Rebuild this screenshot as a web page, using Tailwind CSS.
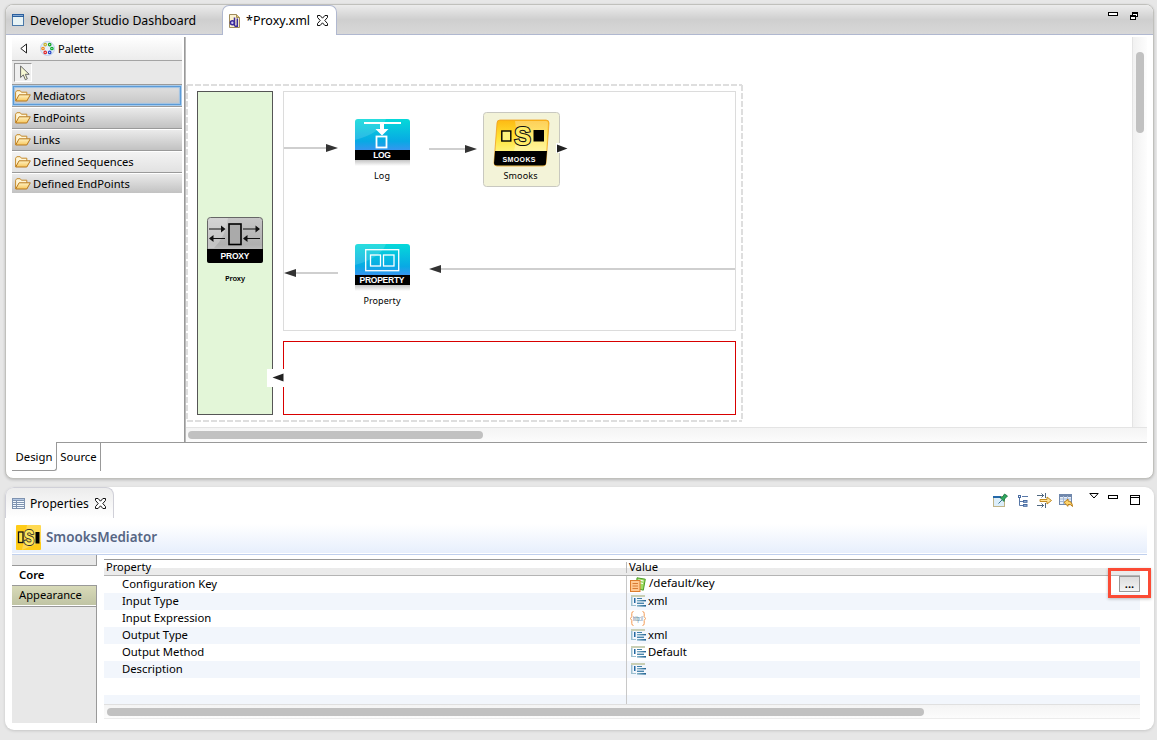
<!DOCTYPE html>
<html lang="en">
<head>
<meta charset="utf-8">
<title>Developer Studio</title>
<script src="https://cdn.jsdelivr.net/npm/@tailwindcss/browser@4"></script>
</head>
<body class="w-[1157px] h-[740px] overflow-hidden bg-[#e7e7e7] font-['Noto_Sans',sans-serif] text-[11.3px] leading-4 text-black">
<svg class="absolute h-0 w-0">
  <defs>
    <linearGradient id="gFolder" x1="0" y1="0" x2="0" y2="1"><stop offset="0" stop-color="#fff3c4"/><stop offset="1" stop-color="#f7c65c"/></linearGradient>
    <linearGradient id="gBlue" x1="0" y1="0" x2="0" y2="1"><stop offset="0" stop-color="#05d9d9"/><stop offset=".7" stop-color="#08a9e4"/><stop offset="1" stop-color="#3c93f0"/></linearGradient>
    <linearGradient id="gGray" x1="0" y1="0" x2="0" y2="1"><stop offset="0" stop-color="#c6c6c6"/><stop offset=".6" stop-color="#b0b0b0"/><stop offset="1" stop-color="#dcdcdc"/></linearGradient>
    <linearGradient id="gYellow" x1="0" y1="0" x2="0" y2="1"><stop offset="0" stop-color="#fdb913"/><stop offset=".35" stop-color="#ffe030"/><stop offset=".7" stop-color="#fff37c"/></linearGradient>
    <linearGradient id="gShadow" x1="0" y1="0" x2="0" y2="1"><stop offset="0" stop-color="#c4c4c4"/><stop offset="1" stop-color="#ffffff"/></linearGradient>
    <linearGradient id="gField" x1="0" y1="0" x2="1" y2="0"><stop offset="0" stop-color="#83b4c8"/><stop offset="1" stop-color="#1e6091"/></linearGradient>
    <symbol id="folder" viewBox="0 0 16 12">
      <path d="M.6 10.8V2.2L1.800.7h3.400l1.200 1.500h5.400v2.600" fill="#fff6d6" stroke="#c58a2c"/>
      <path d="M.7 11l3.400-6.200h11.200L11.800 11z" fill="url(#gFolder)" stroke="#b8781c"/>
    </symbol>
    <symbol id="close" viewBox="0 0 11 11">
      <path d="M.5 .5h2.600l2.400 2.700L7.900.5h2.600v1.900L7.800 5.500l2.700 3.100v1.900H7.900L5.500 7.800l-2.400 2.700H.5V8.600l2.700-3.100L.5 2.400z" fill="#fff" stroke="#111"/>
    </symbol>
    <symbol id="field" viewBox="0 0 16 12">
      <rect x="0" y="0" width="14" height="2" fill="#c9cfb4"/><path d="M0 2h1.500v8H5v1H0z" fill="#9cc0d0"/>
      <rect x="3" y="3" width="1.500" height="5" fill="#2469a0"/>
      <rect x="6" y="3" width="5" height="1" fill="#3f7fa8"/><rect x="6" y="5" width="9" height="1.400" fill="url(#gField)"/><rect x="6" y="7.600" width="7" height="1.400" fill="#4a86ac"/><rect x="6" y="10" width="9" height="1.600" fill="url(#gField)"/>
    </symbol>
  </defs>
</svg>
<div class="flex h-full flex-col pl-[5px] pr-[3px] pt-[4px]">

  <!-- Editor -->
  <section class="flex h-[475px] shrink-0 flex-col overflow-hidden rounded-[8px] border border-[#c0c0bc] bg-white shadow-[0_1px_3px_rgba(0,0,0,0.2)]">
    <div class="flex h-[30px] shrink-0 border-b border-[#b0b8d0] bg-linear-to-b from-[#ececec] via-[#cfcfcf] to-[#d8d8d8]">
      <div class="flex w-[216px] items-center pl-[6px]">
        <svg class="h-3 w-3" viewBox="0 0 12 12"><rect x=".5" y=".5" width="11" height="11" fill="#e8f3f5" stroke="#4a78a8"/><rect width="12" height="3" fill="#2a5f9e"/><path d="M1 1.500h10" stroke="#87abd4"/></svg>
        <span class="ml-[6px] mt-[2px] whitespace-nowrap text-[12.3px]">Developer Studio Dashboard</span>
      </div>
      <div class="-mb-px flex h-[30px] w-[115px] items-center rounded-t-[7px] border border-b-0 border-[#b0b8d0] bg-white pl-[6px]">
        <svg class="h-[14px] w-[11px]" viewBox="0 0 11 14"><path d="M.5.5h7l3 3v10H.5z" fill="#fbf1d0" stroke="#a08c5c"/><path d="M7.500.5v3h3" fill="#e0c070" stroke="#a08c5c"/><circle cx="3.400" cy="8.800" r="2" fill="#cfc8f4" stroke="#3b2a9c" stroke-width="1.500"/><path d="M5.500 3.500v8.500M8.300 4.500v7.700H5.500" fill="none" stroke="#3b2a9c" stroke-width="1.500"/></svg>
        <span class="ml-[6px] mt-px whitespace-nowrap text-[12.500px]">*Proxy.xml</span>
        <svg class="ml-[7px] h-[11px] w-[11px]"><use href="#close"/></svg>
      </div>
      <div class="ml-auto flex items-start gap-[12px] pr-[14px] pt-[7px]">
        <svg class="h-[10px] w-[10px]" viewBox="0 0 10 10"><rect x=".5" y=".5" width="9" height="3" fill="#fff" stroke="#000"/></svg>
        <svg class="h-[8px] w-[9px]" viewBox="0 0 9 8"><g fill="#fff" stroke="#000" shape-rendering="crispEdges"><rect x="2.500" y=".5" width="5" height="4"/><path d="M2 1.500h6"/><rect x=".5" y="3.500" width="5" height="4"/><path d="M0 4.500h6"/></g></svg>
      </div>
    </div>

    <div class="flex h-[407px] shrink-0 pl-[6px] pr-[6px] pt-[2px]">
      <!-- Palette -->
      <aside class="flex w-[170px] shrink-0 flex-col">
        <div class="flex h-[24px] items-center border-b border-[#a4a4a4] bg-linear-to-b from-white to-[#ececec] pl-[8px]">
          <svg class="h-[11px] w-[7px]" viewBox="0 0 7 11"><path d="M6.500 1v9L.8 5.500z" fill="#fff" stroke="#222"/></svg>
          <svg class="ml-[13px] h-[15px] w-[15px]" viewBox="0 0 15 15"><circle cx="7.500" cy="7.500" r="7" fill="#e4eefb" stroke="#bcd0ea"/><g fill="#fff" stroke-width="1.300"><circle cx="5.200" cy="3.600" r="1.200" stroke="#c8b430"/><circle cx="9.700" cy="3.600" r="1.200" stroke="#18a428"/><circle cx="3" cy="7.500" r="1.200" stroke="#f08c20"/><circle cx="11.900" cy="7.500" r="1.200" stroke="#10ac34"/><circle cx="5.200" cy="11.400" r="1.200" stroke="#e02c2c"/><circle cx="9.700" cy="11.400" r="1.200" stroke="#2848c8"/></g></svg>
          <span class="ml-[3px] mt-px text-[11px]">Palette</span>
        </div>
        <div class="h-[23px] bg-[#e8e8e8] pl-[2px] pt-[2px]">
          <div class="flex h-[19px] w-[18px] items-center justify-center border border-[#999] border-r-white border-b-white bg-[#efefef] pl-[3px]">
            <svg class="h-[16px] w-[10px]" viewBox="0 0 10 16"><path d="M.6 1v11.500l2.700-2.600 2 4.800 2-.9-2-4.500h3.900z" fill="#f7f8d4" stroke="#666"/></svg>
          </div>
        </div>
        <div class="flex h-[22px] items-center border-t border-[#9a9a9a] bg-linear-to-b from-[#e2e2e2] to-[#c4c4c4] pl-[3px] text-[11px] shadow-[inset_0_0_0_1px_#a9cbea,inset_0_0_0_2px_#5b9bd8,inset_0_0_1px_3px_#9fc3e4]"><svg class="h-3 w-4"><use href="#folder"/></svg><span class="ml-[2px]">Mediators</span></div>
        <div class="flex h-[22px] items-center border-t border-[#9a9a9a] bg-linear-to-b from-[#ededed] to-[#c2c2c2] pl-[3px] text-[11px] shadow-[inset_0_1px_0_#fff]"><svg class="h-3 w-4"><use href="#folder"/></svg><span class="ml-[2px]">EndPoints</span></div>
        <div class="flex h-[22px] items-center border-t border-[#9a9a9a] bg-linear-to-b from-[#ededed] to-[#c2c2c2] pl-[3px] shadow-[inset_0_1px_0_#fff]"><svg class="h-3 w-4"><use href="#folder"/></svg><span class="ml-[2px]">Links</span></div>
        <div class="flex h-[22px] items-center border-t border-[#9a9a9a] bg-linear-to-b from-[#f4f4f4] to-[#e2e2e2] pl-[3px] text-[11.200px] shadow-[inset_0_1px_0_#fff]"><svg class="h-3 w-4"><use href="#folder"/></svg><span class="ml-[2px]">Defined Sequences</span></div>
        <div class="flex h-[21px] items-center border-t border-[#9a9a9a] bg-linear-to-b from-[#ededed] to-[#c2c2c2] pl-[3px] pt-px text-[11.200px] shadow-[inset_0_1px_0_#fff]"><svg class="h-3 w-4"><use href="#folder"/></svg><span class="ml-[2px]">Defined EndPoints</span></div>
      </aside>
      <div class="ml-[2px] w-[2px] shrink-0 border-l border-[#999] bg-[#bbb]"></div>

      <!-- Diagram -->
      <div class="flex min-w-0 grow flex-col">
        <div class="flex h-[390px] shrink-0">
          <svg class="h-[390px] w-[946px] shrink-0" viewBox="186 37 946 390" font-family="'Noto Sans',sans-serif">
            <g fill="none" stroke="#dedede" stroke-width="2" stroke-dasharray="6 2"><path d="M187 85H742"/><path d="M742 85V421"/><path d="M187 421H742"/><path d="M187 85V421"/></g>
            <rect x="197.500" y="91.500" width="75" height="323" fill="#e3f6d8" stroke="#555"/>
            <rect x="283.500" y="91.500" width="452" height="239" fill="#fff" stroke="#dcdcdc"/>
            <rect x="283.500" y="341.500" width="452" height="73" fill="#fff" stroke="#d80000"/>
            <rect x="267" y="369" width="18" height="18" fill="#fff"/>
            <path d="M272.500 377.500l11-4v8z" fill="#222"/>
            <g stroke="#cfcfcf" stroke-width="2"><path d="M284 148H330"/><path d="M429 149H468"/><path d="M292 273H338"/><path d="M438 269H735"/></g>
            <g fill="#333"><path d="M338 148l-12-4v8z"/><path d="M477 149l-12-4v8z"/><path d="M284 273l12-4v8z"/><path d="M429 269l12-4v8z"/></g>

            <rect x="207.500" y="217.500" width="55" height="45" rx="3" fill="url(#gGray)" stroke="#666"/>
            <path d="M208 248V220q0-2 3-2H228q-2 18-14 30z" fill="#fff" opacity=".25"/>
            <path d="M207 249h56v12q0 2-2 2h-52q-2 0-2-2z"/>
            <rect x="229" y="224" width="12" height="20.500" fill="#aaa" stroke="#000" stroke-width="1.600"/>
            <g stroke="#111" stroke-width="1.200" fill="#111"><path d="M209 229H222M225 238.500H212M243 229H256M260 238.500H247"/><path stroke="none" d="M221 225.500l4.500 3.500-4.500 3.500zM213.500 235l-4.500 3.500 4.500 3.500zM255.500 225.500l4.500 3.500-4.500 3.500zM247.500 235l-4.500 3.500 4.500 3.500z"/></g>
            <text x="235" y="259" font-family="'Liberation Sans',sans-serif" font-weight="700" font-size="8.500" fill="#fff" text-anchor="middle" textLength="29">PROXY</text>
            <text x="235" y="281" font-size="7.500" font-weight="600" text-anchor="middle" textLength="20">Proxy</text>

            <rect x="355" y="160" width="55" height="6" fill="url(#gShadow)"/>
            <path d="M355 151V122q0-3 3-3h49q3 0 3 3V151z" fill="url(#gBlue)"/>
            <path d="M355 140V122q0-3 3-3H386q-5 14-31 21z" fill="#fff" opacity=".14"/>
            <rect x="355" y="150" width="55" height="10"/>
            <path d="M364 122h37v2H384v5h4.500L382 135.500 375.500 129H380v-5H364z" fill="#fff"/>
            <rect x="376.500" y="136.500" width="10" height="11" fill="none" stroke="#fff" stroke-width="1.800"/>
            <text x="382" y="158" font-family="'Liberation Sans',sans-serif" font-weight="700" font-size="8.500" fill="#fff" text-anchor="middle" textLength="17.500">LOG</text>
            <text x="382" y="179" font-size="9" text-anchor="middle" textLength="16">Log</text>

            <rect x="355" y="285" width="55" height="6" fill="url(#gShadow)"/>
            <path d="M355 276V247q0-3 3-3h49q3 0 3 3V276z" fill="url(#gBlue)"/>
            <path d="M355 265V247q0-3 3-3H386q-5 14-31 21z" fill="#fff" opacity=".14"/>
            <rect x="355" y="275" width="55" height="10"/>
            <g fill="none" stroke="#fff" stroke-width="1.300"><rect x="365.700" y="249.700" width="33" height="21"/><rect x="370.500" y="255" width="10" height="11"/><rect x="383.500" y="255" width="10.500" height="11"/></g>
            <text x="382" y="283" font-family="'Liberation Sans',sans-serif" font-weight="700" font-size="8.500" fill="#fff" text-anchor="middle" textLength="45">PROPERTY</text>
            <text x="382" y="304" font-size="9" text-anchor="middle" textLength="37">Property</text>

            <rect x="483.500" y="112.500" width="76" height="74" rx="3" fill="#f3f3d8" stroke="#c8c8c0"/>
            <path d="M500 120H546q3 0 3 3L546 163q0 3-3 3H497q-3 0-3-3L497 123q0-3 3-3z" fill="url(#gYellow)" stroke="#f0a020" stroke-width=".800"/>
            <path d="M515 121H546q2 0 2 2L546 151H514q4-14 1-30z" fill="#fff" opacity=".3"/>
            <path d="M495 151H547L546 163q0 2.500-3 2.500H497q-3 0-3-2.500z"/>
            <rect x="501.800" y="131" width="9" height="10" fill="#fff37c" stroke="#000" stroke-width="1.400"/>
            <rect x="533.500" y="130" width="10.500" height="11.500"/>
            <text x="522.500" y="145" font-family="'Liberation Sans',sans-serif" font-size="25" font-weight="700" fill="#ffec68" stroke="#111" stroke-width="2.200" paint-order="stroke" text-anchor="middle">S</text>
            <text x="519" y="162" font-family="'Liberation Sans',sans-serif" font-weight="700" font-size="7" fill="#fff" text-anchor="middle" textLength="33">SMOOKS</text>
            <text x="520.500" y="179" font-size="9" text-anchor="middle" textLength="34">Smooks</text>
            <rect x="556" y="143" width="4" height="10" fill="#fff"/>
            <path d="M557 144.500l10.500 4-10.500 4z" fill="#222"/>
          </svg>
          <div class="flex grow justify-center border-l border-[#e4e4e4] bg-linear-to-r from-[#f1f1f1] to-[#fdfdfd] pt-[15px]"><div class="h-[81px] w-[8px] rounded-full bg-[#c1c1c1]"></div></div>
        </div>
        <div class="h-[15px] border-t border-[#e4e4e4] bg-linear-to-b from-[#f4f4f4] to-[#fcfcfc] pl-[2px] pt-[3px]"><div class="h-[8px] w-[295px] rounded-full bg-[#c1c1c1]"></div></div>
      </div>
    </div>

    <div class="flex h-[29px] shrink-0 pl-[6px] pr-[6px]">
      <div class="flex w-[45px] items-center justify-center rounded-br-[3px] border-r border-b border-[#999] pt-[2px]">Design</div>
      <div class="flex w-[44px] items-center justify-center border-t border-r border-[#999]">Source</div>
      <div class="grow border-t border-[#999]"></div>
    </div>
  </section>

  <!-- Properties -->
  <section class="mt-[8px] flex h-[243px] shrink-0 flex-col overflow-hidden rounded-[9px] bg-white shadow-[0_1px_3px_rgba(0,0,0,0.15)]">
    <div class="flex h-[37px] shrink-0">
      <div class="flex h-[31px] w-[109px] items-center rounded-t-[8px] border border-b-0 border-[#d0d0d8] bg-linear-to-b from-[#ececec] to-white pl-[6px]">
        <svg class="h-[11px] w-[13px]" viewBox="0 0 13 11" shape-rendering="crispEdges"><rect width="13" height="11" fill="#7f93b0"/><rect x="1" y="1" width="11" height="1" fill="#b4c8e4"/><g fill="#f4faff"><path d="M1 3h3v1H1zM5 3h7v1H5zM1 5h3v1H1zM5 5h7v1H5zM1 7h3v1H1zM5 7h7v1H5zM1 9h3v1H1zM5 9h7v1H5z"/></g></svg>
        <span class="ml-[5px] mt-px text-[12.100px]">Properties</span>
        <svg class="ml-[6px] h-[11px] w-[11px]"><use href="#close"/></svg>
      </div>
      <div class="ml-auto flex items-start pr-[14px] pt-[6px]">
        <svg class="h-[15px] w-[15px]" viewBox="0 0 15 15"><rect x=".5" y="3.500" width="11" height="10" fill="#dceefa" stroke="#c0b488"/><path d="M0 4h8" stroke="#2468a8" stroke-width="2"/><path d="M5.500 10.500l4-4" stroke="#3c7890"/><path d="M7 4.500l2.500-.5 2-3 3 2-3 3-.5 2.500z" fill="#2fa860" stroke="#147038" stroke-width=".800"/></svg>
        <svg class="ml-[10px] mt-[2px] h-[12px] w-[10px]" viewBox="0 0 10 12"><path d="M1.500 2v8.500H5M1.500 6.500H5M4 1.500h6" fill="none" stroke="#5878a8"/><rect x=".5" y=".5" width="2" height="2" fill="#fff" stroke="#4a6ca0"/><rect x="5.500" y="5.500" width="3.500" height="1.800" fill="#9cb8e0" stroke="#4a6ca0"/><rect x="5.500" y="9.500" width="3.500" height="1.800" fill="#9cb8e0" stroke="#4a6ca0"/></svg>
        <svg class="ml-[9px] h-[15px] w-[15px]" viewBox="0 0 15 15"><path d="M0 2.500h7M4.500 .5l2 2-2 2M8.500 0v5M0 12.500h7M4.500 10.500l2 2-2 2M8.500 10v5" fill="none" stroke="#506880"/><path d="M3 6.500h7V4l4.500 3.500L10 11V8.500H3z" fill="#ffe49c" stroke="#c08a20"/></svg>
        <svg class="ml-[7px] mt-px h-[13px] w-[14px]" viewBox="0 0 14 13"><rect x=".5" y=".5" width="12" height="10" fill="#e8f0fa" stroke="#7088ac"/><path d="M1 2h11" stroke="#7088ac" stroke-width="2"/><path d="M1 5h11M1 7.500h11M4.500 2v8M8.500 2v8" stroke="#a4b8d4"/><path d="M5 8.500l4-3.500v2q4 0 4.500 5.500Q12 10 9 10.500v1.800z" fill="#ffd468" stroke="#b87c18"/></svg>
        <svg class="ml-[16px] h-[6px] w-[10px]" viewBox="0 0 10 6"><path d="M.8.5h8.400L5 5z" fill="#fff" stroke="#000"/></svg>
        <svg class="ml-[9px] mt-[2px] h-[4px] w-[10px]" viewBox="0 0 10 4"><rect x=".5" y=".5" width="9" height="3" fill="#fff" stroke="#000"/></svg>
        <svg class="ml-[12px] mt-[2px] h-[10px] w-[10px]" viewBox="0 0 10 10" shape-rendering="crispEdges"><rect x=".5" y=".5" width="9" height="9" fill="#fff" stroke="#000"/><path d="M0 2.500h10" stroke="#000"/></svg>
      </div>
    </div>
    <div class="ml-[7px] mr-[7px] flex h-[31px] shrink-0 items-center border-b border-[#c0d0ee] bg-linear-to-b from-white to-[#e6eefc] pb-[4px] pl-[4px] shadow-[inset_0_-1px_0_#fff]">
      <svg class="h-[25px] w-[25px]" viewBox="0 0 25 25"><rect width="25" height="25" rx="1" fill="#ffcc18"/><path d="M11 0h14v17L6 25z" fill="#fff" opacity=".25"/><rect x="2.500" y="7" width="4.500" height="10.500" fill="#ffe24c" stroke="#111" stroke-width="1.300"/><rect x="19.500" y="7" width="4" height="11.500"/><text x="13" y="20" font-family="'Liberation Sans',sans-serif" font-size="22" font-weight="700" text-anchor="middle" textLength="10.500" lengthAdjust="spacingAndGlyphs" fill="#ffe860" stroke="#333" stroke-width="2" paint-order="stroke">S</text></svg>
      <h1 class="ml-[5px] text-[13.400px] font-semibold text-[#566684]">SmooksMediator</h1>
    </div>

    <div class="ml-[7px] mr-[14px] flex h-[168px] shrink-0">
      <nav class="flex w-[85px] shrink-0 flex-col">
        <div class="h-[11px] border-r border-b border-[#999] bg-[#e8e8e8]"></div>
        <div class="flex h-[19px] items-center pb-[2px] pl-[7px] font-semibold">Core</div>
        <div class="flex h-[20px] items-center border-t border-r border-[#999] bg-linear-to-b from-[#d8dab8] to-[#c0c4a4] pb-px pl-[7px] text-[11.200px]">Appearance</div>
        <div class="h-[2px] border-b border-r border-[#999] bg-white"></div>
        <div class="grow border-r border-[#999] bg-[#e8e8e8]"></div>
      </nav>

      <div class="ml-[7px] mt-[4px] flex grow flex-col">
        <div class="flex h-[17px] shrink-0 items-center border-y border-t-[#999] border-b-[#b4b4b4] bg-linear-to-b from-white from-50% to-[#ebebeb] to-50%">
          <div class="flex h-[11px] w-[523px] items-center border-r border-[#bbb] pl-[2px]"><span class="-mt-px text-[11.100px]">Property</span></div><div class="-mt-px pl-[2px]">Value</div>
        </div>
        <div class="relative flex h-[17px] shrink-0">
          <div class="w-[523px] border-r border-[#c8c8c8] pl-[18px]">Configuration Key</div>
          <div class="flex grow items-center">
            <svg class="ml-[3px] h-[15px] w-[16px]" viewBox="0 0 16 15"><path d="M7 .8l8.300 1.400-2 11-7-2z" fill="#9edc60" stroke="#4a9a28"/><path d="M8.500 3l5 1M8.500 5.500l4.500 1" stroke="#fff"/><rect x=".5" y="3.500" width="9.500" height="11" fill="#ffc890" stroke="#dc7c2c"/><path d="M2.500 6.500h5.500M2.500 9h5.500M2.500 11.500h5.500" stroke="#d87c34"/></svg>
            <span class="ml-[3px] -mt-[3px] text-[11.600px]">/default/key</span>
            <div class="ml-auto -mt-px flex h-[16px] w-[21px] items-end justify-center border border-[#999] bg-linear-to-b from-[#ddd] to-[#f4f4f4]"><span class="font-semibold leading-[14px]">...</span></div>
          </div>
          <div class="absolute -top-[8px] -right-[11px] h-[30px] w-[43px] border-[3px] border-[#fb4b35] shadow-[0_1px_3px_rgba(0,0,0,0.25)]"></div>
        </div>
        <div class="flex h-[17px] shrink-0 bg-[#f2f6fc]"><div class="w-[523px] border-r border-[#c8c8c8] pl-[18px]">Input Type</div><div class="flex h-4 items-center"><svg class="ml-[4px] h-3 w-4"><use href="#field"/></svg><span class="ml-px">xml</span></div></div>
        <div class="flex h-[17px] shrink-0"><div class="w-[523px] border-r border-[#c8c8c8] pl-[18px]">Input Expression</div><div class="flex items-center"><svg class="ml-[3px] h-[15px] w-4 overflow-visible" viewBox="0 0 16 15"><path d="M3.500.5Q1.800.5 1.800 2.500v3L.5 7.500l1.300 2v3q0 2 1.700 2M12.500.5q1.700 0 1.700 2v3l1.300 2-1.300 2v3q0 2-1.700 2" fill="none" stroke="#f49a54"/><text x="3" y="9.500" font-family="'Liberation Sans',sans-serif" font-weight="700" font-size="6.500" textLength="10" lengthAdjust="spacingAndGlyphs" fill="#7090a8">http://</text></svg></div></div>
        <div class="flex h-[17px] shrink-0 bg-[#f2f6fc]"><div class="w-[523px] border-r border-[#c8c8c8] pl-[18px]">Output Type</div><div class="flex h-4 items-center"><svg class="ml-[4px] h-3 w-4"><use href="#field"/></svg><span class="ml-px">xml</span></div></div>
        <div class="flex h-[17px] shrink-0"><div class="w-[523px] border-r border-[#c8c8c8] pl-[18px]">Output Method</div><div class="flex h-4 items-center"><svg class="ml-[4px] h-3 w-4"><use href="#field"/></svg><span class="ml-px">Default</span></div></div>
        <div class="flex h-[17px] shrink-0 bg-[#f2f6fc]"><div class="w-[523px] border-r border-[#c8c8c8] pl-[18px]">Description</div><div class="flex h-4 items-center"><svg class="ml-[4px] h-3 w-4"><use href="#field"/></svg></div></div>
        <div class="flex h-[17px] shrink-0"><div class="w-[523px] border-r border-[#c8c8c8]"></div></div>
        <div class="flex h-[9px] shrink-0 bg-[#f2f6fc]"><div class="w-[523px] border-r border-[#c8c8c8]"></div></div>
        <div class="h-[15px] shrink-0 border-y border-t-[#e0e0e0] border-b-[#ececec] bg-linear-to-b from-[#f4f4f4] to-[#fcfcfc] pl-[3px] pt-[3px]"><div class="h-[8px] w-[817px] rounded-full bg-[#c1c1c1]"></div></div>
      </div>
    </div>
  </section>
</div>
</body>
</html>
